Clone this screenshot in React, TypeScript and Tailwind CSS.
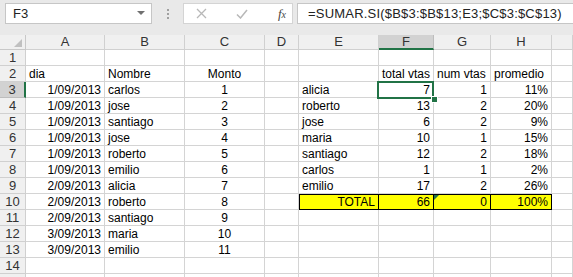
import React from "react";

type Align = "l" | "r" | "c";
interface Cell {
  v: string;
  a?: Align;
}

const cols = ["A", "B", "C", "D", "E", "F", "G", "H", ""];

const names = [
  ["1/09/2013", "carlos", "1"],
  ["1/09/2013", "jose", "2"],
  ["1/09/2013", "santiago", "3"],
  ["1/09/2013", "jose", "4"],
  ["1/09/2013", "roberto", "5"],
  ["1/09/2013", "emilio", "6"],
  ["2/09/2013", "alicia", "7"],
  ["2/09/2013", "roberto", "8"],
  ["2/09/2013", "santiago", "9"],
  ["3/09/2013", "maria", "10"],
  ["3/09/2013", "emilio", "11"],
];

const summary = [
  ["alicia", "7", "1", "11%"],
  ["roberto", "13", "2", "20%"],
  ["jose", "6", "2", "9%"],
  ["maria", "10", "1", "15%"],
  ["santiago", "12", "2", "18%"],
  ["carlos", "1", "1", "2%"],
  ["emilio", "17", "2", "26%"],
];

function buildRows(): Cell[][] {
  const rows: Cell[][] = [];
  for (let r = 1; r <= 15; r++) {
    const row: Cell[] = cols.map(() => ({ v: "" }));
    if (r === 2) {
      row[0] = { v: "dia" };
      row[1] = { v: "Nombre" };
      row[2] = { v: "Monto", a: "c" };
      row[5] = { v: "total vtas" };
      row[6] = { v: "num vtas" };
      row[7] = { v: "promedio" };
    }
    if (r >= 3 && r <= 13) {
      const d = names[r - 3];
      row[0] = { v: d[0], a: "r" };
      row[1] = { v: d[1] };
      row[2] = { v: d[2], a: "c" };
    }
    if (r >= 3 && r <= 9) {
      const s = summary[r - 3];
      row[4] = { v: s[0] };
      row[5] = { v: s[1], a: "r" };
      row[6] = { v: s[2], a: "r" };
      row[7] = { v: s[3], a: "r" };
    }
    if (r === 10) {
      row[4] = { v: "TOTAL", a: "r" };
      row[5] = { v: "66", a: "r" };
      row[6] = { v: "0", a: "r" };
      row[7] = { v: "100%", a: "r" };
    }
    rows.push(row);
  }
  return rows;
}

const alignClass = { l: "justify-start", r: "justify-end", c: "justify-center" };

export default function App() {
  const rows = buildRows();

  return (
    <div
      className="w-[573px] h-[277px] overflow-hidden bg-[#e9e9e9] text-[#000] text-[12px]"
      style={{ fontFamily: '"Liberation Sans", Arial, sans-serif' }}
    >
      {/* formula bar */}
      <div className="h-[35px] flex items-start pt-[3px] pl-[5px] gap-0">
        <div className="w-[147px] h-[21px] bg-white border border-[#c6c6c6] flex items-center justify-between pl-[7px] pr-[6px] text-[13px] text-[#222]">
          <span>F3</span>
          <svg width="8" height="5" viewBox="0 0 8 5">
            <path d="M0 0 L8 0 L4 4 Z" fill="#707070" />
          </svg>
        </div>
        <div className="w-[31px] h-[21px] flex flex-col items-center justify-center gap-[2px]">
          <span className="w-[2px] h-[2px] bg-[#a0a0a0]" />
          <span className="w-[2px] h-[2px] bg-[#a0a0a0]" />
          <span className="w-[2px] h-[2px] bg-[#a0a0a0]" />
        </div>
        <div className="w-[110px] h-[21px] bg-white border border-[#d4d4d4] flex items-center pl-[12px] pr-[6px]">
          <svg width="11" height="11" viewBox="0 0 11 11">
            <path d="M1 1 L10 10 M10 1 L1 10" stroke="#b8b8b8" strokeWidth="1.3" />
          </svg>
          <svg width="12" height="10" viewBox="0 0 12 10" className="ml-[29px]">
            <path d="M1 5.5 L4.5 9 L11 1" stroke="#b8b8b8" strokeWidth="1.5" fill="none" />
          </svg>
          <span
            className="ml-auto text-[13px] italic text-[#444]"
            style={{ fontFamily: '"Liberation Serif", serif' }}
          >
            f<span className="text-[10px]">x</span>
          </span>
        </div>
        <div className="flex-1 ml-[4px] h-[21px] bg-white border border-[#c6c6c6] border-r-0 flex items-center pl-[10px] text-[13px] tracking-[0.2px] text-[#222] whitespace-nowrap">
          =SUMAR.SI($B$3:$B$13;E3;$C$3:$C$13)
        </div>
      </div>

      {/* sheet */}
      <div className="relative bg-white">
        <div className="grid grid-cols-[26px_79px_80px_80px_34px_80px_55px_57px_61px_1fr]">
          {/* column header row */}
          <div className="h-[15px] bg-[#f0f0f0] border-r border-b border-[#c8c8c8] relative">
            <svg width="8" height="8" viewBox="0 0 8 8" className="absolute right-[3px] bottom-[2px]">
              <path d="M8 0 L8 8 L0 8 Z" fill="#c0c0c0" />
            </svg>
          </div>
          {cols.map((c, i) =>
            c === "F" ? (
              <div
                key={i}
                className="h-[15px] bg-[#d2d2d2] border-r border-[#bdbdbd] border-b-2 border-b-[#217346] flex items-center justify-center text-[#333] text-[13px]"
              >
                {c}
              </div>
            ) : (
              <div
                key={i}
                className="h-[15px] bg-[#f0f0f0] border-r border-b border-[#d0d0d0] flex items-center justify-center text-[#333] text-[13px]"
              >
                {c}
              </div>
            ),
          )}

          {rows.map((row, ri) => {
            const r = ri + 1;
            return (
              <React.Fragment key={r}>
                {r === 3 ? (
                  <div className="h-4 bg-[#d2d2d2] border-b border-[#bdbdbd] border-r-2 border-r-[#217346] flex items-center justify-center text-[13px] text-[#333]">
                    {r}
                  </div>
                ) : (
                  <div className="h-4 bg-[#f0f0f0] border-r border-b border-[#d0d0d0] flex items-center justify-center text-[13px] text-[#333]">
                    {r < 15 ? r : ""}
                  </div>
                )}
                {row.map((cell, ci) => {
                  const yellow = r === 10 && ci >= 4 && ci <= 7;
                  const a = alignClass[cell.a ?? "l"];
                  if (yellow) {
                    return (
                      <div
                        key={ci}
                        className={`h-4 relative bg-[#ffff00] border-r border-b border-black flex items-center px-[3px] whitespace-nowrap ${a} ${ci === 4 ? "shadow-[inset_1px_1px_0_#000]" : "shadow-[inset_0_1px_0_#000]"}`}
                      >
                        {ci === 6 && (
                          <svg width="5" height="5" viewBox="0 0 5 5" className="absolute left-0 top-[1px]">
                            <path d="M0 0 L5 0 L0 5 Z" fill="#217346" />
                          </svg>
                        )}
                        {cell.v}
                      </div>
                    );
                  }
                  return (
                    <div
                      key={ci}
                      className={`h-4 border-r border-b border-[#d4d4d4] flex items-center px-[3px] whitespace-nowrap overflow-visible ${a}`}
                    >
                      {cell.v}
                    </div>
                  );
                })}
              </React.Fragment>
            );
          })}
        </div>

        {/* selected cell F3 */}
        <div className="absolute left-[377px] top-[46px] w-[57px] h-[18px] border-2 border-[#217346] pointer-events-none" />
        <div className="absolute left-[431px] top-[61px] w-[5px] h-[5px] bg-[#217346] border border-white box-content" />
      </div>
    </div>
  );
}
